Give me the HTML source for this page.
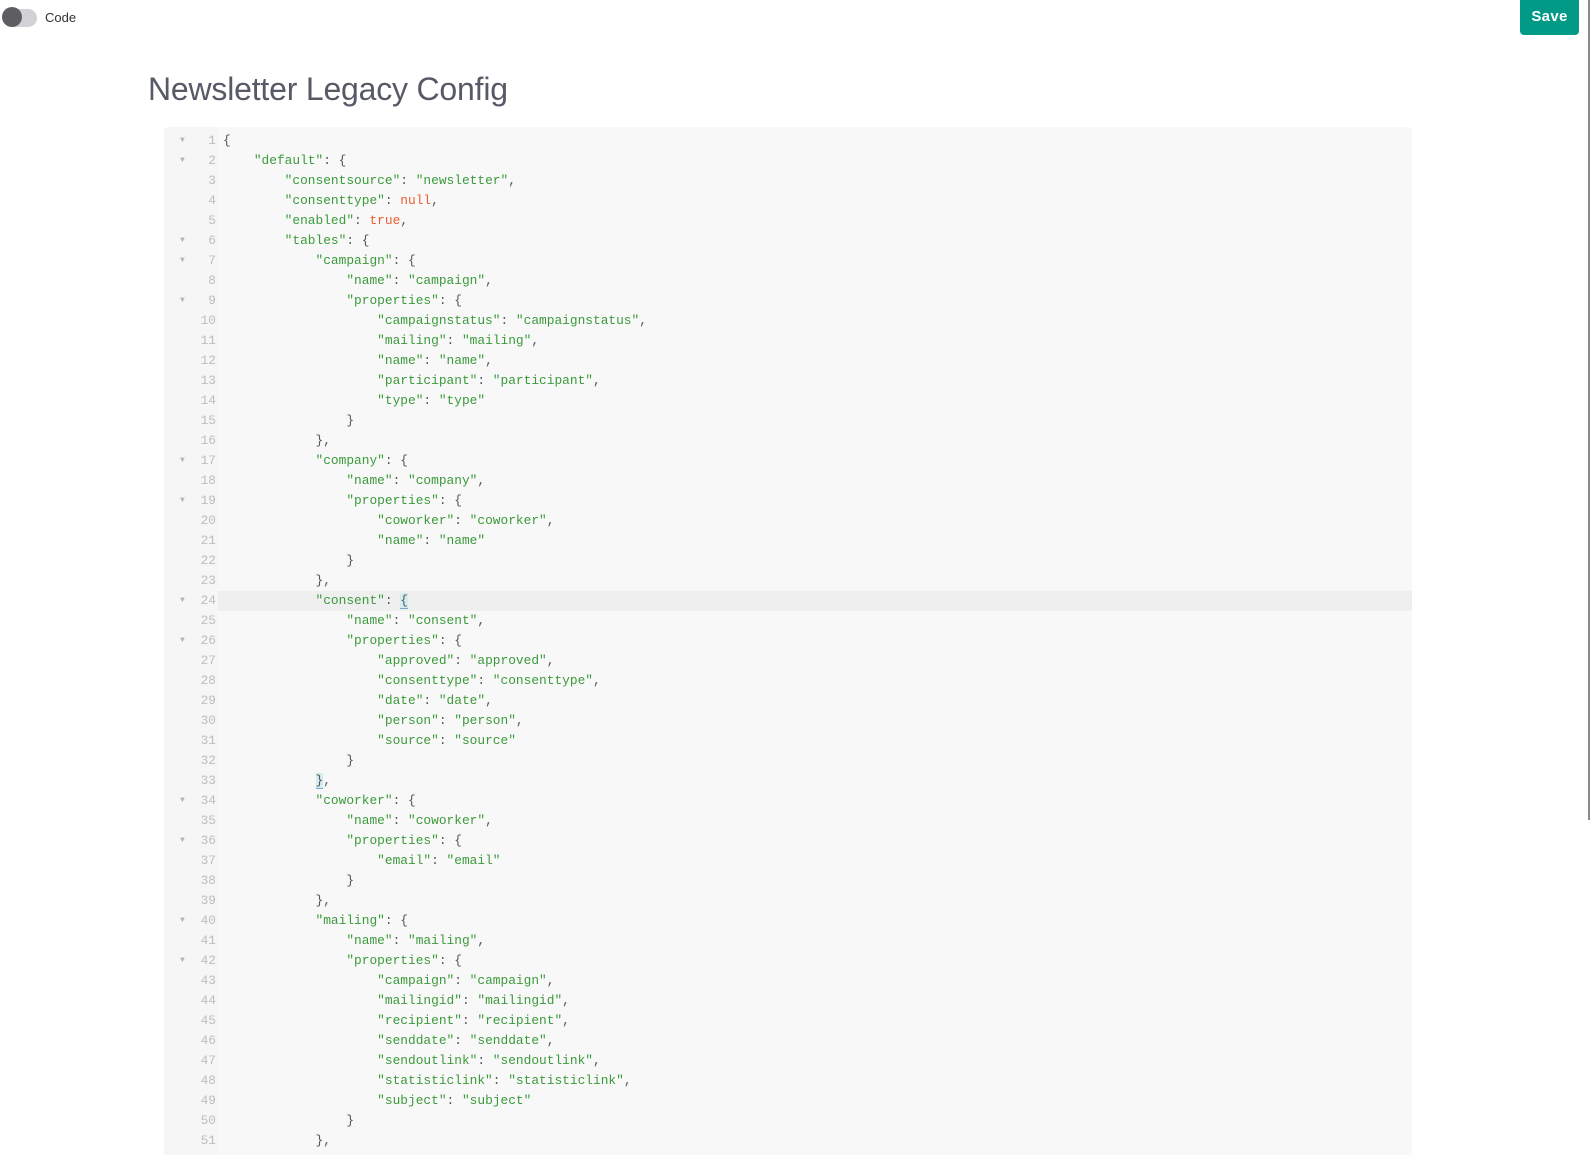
<!DOCTYPE html>
<html><head><meta charset="utf-8"><style>
html,body{margin:0;padding:0;background:#fff;width:1591px;height:1155px;overflow:hidden;position:relative;font-family:"Liberation Sans",sans-serif}
.track{position:absolute;left:3px;top:9px;width:34px;height:18px;border-radius:9px;background:#d2d2d6}
.knob{position:absolute;left:2px;top:7px;width:20px;height:20px;border-radius:50%;background:#5e5e60}
.lbl{position:absolute;left:45px;top:10px;font-size:13px;color:#333}
.save{position:absolute;left:1520px;top:0;width:59px;height:35px;background:#009a87;border-radius:0 0 4px 4px;color:#fff;font-weight:bold;font-size:15px;text-align:center;line-height:33px;letter-spacing:.3px}
.sb{position:absolute;left:1588px;top:0;width:2px;height:820px;background:#8a8a8a}
h1{position:absolute;left:148px;top:71px;margin:0;font-weight:normal;font-size:32px;color:#575a66;letter-spacing:-.2px}
.ed{position:absolute;left:164px;top:127px;width:1248px;height:1040px;background:#f8f8f8;border-radius:4px;overflow:hidden}
.gut{position:absolute;left:0;top:0;width:54px;height:100%;background:#f6f6f6}
.lines{position:absolute;left:0;top:4px;width:100%}
.l{position:relative;height:20px;line-height:20px;font-family:"Liberation Mono",monospace;font-size:12.85px;white-space:pre;color:#555}
.l .n{position:absolute;left:0;width:52px;text-align:right;color:#bdbdbd}
.l .f{position:absolute;left:16px;top:0;color:#b5b5b5;font-size:8px}
.l .c{position:absolute;left:59px}
.l.hl::before{content:"";position:absolute;left:54px;right:0;top:0;height:20px;background:#efefef}
.s{color:#3b9a3b}.k{color:#ed5b2e}
.m{background:#d3ecef;border-bottom:1px solid #7ac}
</style></head><body>
<div class="track"></div><div class="knob"></div><div class="lbl">Code</div>
<div class="save">Save</div>
<div class="sb"></div>
<h1>Newsletter Legacy Config</h1>
<div class="ed"><div class="gut"></div><div class="lines">
<div class="l"><span class="f">▼</span><span class="n">1</span><span class="c">{</span></div>
<div class="l"><span class="f">▼</span><span class="n">2</span><span class="c">    <span class="s">"default"</span>: {</span></div>
<div class="l"><span class="n">3</span><span class="c">        <span class="s">"consentsource"</span>: <span class="s">"newsletter"</span>,</span></div>
<div class="l"><span class="n">4</span><span class="c">        <span class="s">"consenttype"</span>: <span class="k">null</span>,</span></div>
<div class="l"><span class="n">5</span><span class="c">        <span class="s">"enabled"</span>: <span class="k">true</span>,</span></div>
<div class="l"><span class="f">▼</span><span class="n">6</span><span class="c">        <span class="s">"tables"</span>: {</span></div>
<div class="l"><span class="f">▼</span><span class="n">7</span><span class="c">            <span class="s">"campaign"</span>: {</span></div>
<div class="l"><span class="n">8</span><span class="c">                <span class="s">"name"</span>: <span class="s">"campaign"</span>,</span></div>
<div class="l"><span class="f">▼</span><span class="n">9</span><span class="c">                <span class="s">"properties"</span>: {</span></div>
<div class="l"><span class="n">10</span><span class="c">                    <span class="s">"campaignstatus"</span>: <span class="s">"campaignstatus"</span>,</span></div>
<div class="l"><span class="n">11</span><span class="c">                    <span class="s">"mailing"</span>: <span class="s">"mailing"</span>,</span></div>
<div class="l"><span class="n">12</span><span class="c">                    <span class="s">"name"</span>: <span class="s">"name"</span>,</span></div>
<div class="l"><span class="n">13</span><span class="c">                    <span class="s">"participant"</span>: <span class="s">"participant"</span>,</span></div>
<div class="l"><span class="n">14</span><span class="c">                    <span class="s">"type"</span>: <span class="s">"type"</span></span></div>
<div class="l"><span class="n">15</span><span class="c">                }</span></div>
<div class="l"><span class="n">16</span><span class="c">            },</span></div>
<div class="l"><span class="f">▼</span><span class="n">17</span><span class="c">            <span class="s">"company"</span>: {</span></div>
<div class="l"><span class="n">18</span><span class="c">                <span class="s">"name"</span>: <span class="s">"company"</span>,</span></div>
<div class="l"><span class="f">▼</span><span class="n">19</span><span class="c">                <span class="s">"properties"</span>: {</span></div>
<div class="l"><span class="n">20</span><span class="c">                    <span class="s">"coworker"</span>: <span class="s">"coworker"</span>,</span></div>
<div class="l"><span class="n">21</span><span class="c">                    <span class="s">"name"</span>: <span class="s">"name"</span></span></div>
<div class="l"><span class="n">22</span><span class="c">                }</span></div>
<div class="l"><span class="n">23</span><span class="c">            },</span></div>
<div class="l hl"><span class="f">▼</span><span class="n">24</span><span class="c">            <span class="s">"consent"</span>: <span class="m">{</span></span></div>
<div class="l"><span class="n">25</span><span class="c">                <span class="s">"name"</span>: <span class="s">"consent"</span>,</span></div>
<div class="l"><span class="f">▼</span><span class="n">26</span><span class="c">                <span class="s">"properties"</span>: {</span></div>
<div class="l"><span class="n">27</span><span class="c">                    <span class="s">"approved"</span>: <span class="s">"approved"</span>,</span></div>
<div class="l"><span class="n">28</span><span class="c">                    <span class="s">"consenttype"</span>: <span class="s">"consenttype"</span>,</span></div>
<div class="l"><span class="n">29</span><span class="c">                    <span class="s">"date"</span>: <span class="s">"date"</span>,</span></div>
<div class="l"><span class="n">30</span><span class="c">                    <span class="s">"person"</span>: <span class="s">"person"</span>,</span></div>
<div class="l"><span class="n">31</span><span class="c">                    <span class="s">"source"</span>: <span class="s">"source"</span></span></div>
<div class="l"><span class="n">32</span><span class="c">                }</span></div>
<div class="l"><span class="n">33</span><span class="c">            <span class="m">}</span>,</span></div>
<div class="l"><span class="f">▼</span><span class="n">34</span><span class="c">            <span class="s">"coworker"</span>: {</span></div>
<div class="l"><span class="n">35</span><span class="c">                <span class="s">"name"</span>: <span class="s">"coworker"</span>,</span></div>
<div class="l"><span class="f">▼</span><span class="n">36</span><span class="c">                <span class="s">"properties"</span>: {</span></div>
<div class="l"><span class="n">37</span><span class="c">                    <span class="s">"email"</span>: <span class="s">"email"</span></span></div>
<div class="l"><span class="n">38</span><span class="c">                }</span></div>
<div class="l"><span class="n">39</span><span class="c">            },</span></div>
<div class="l"><span class="f">▼</span><span class="n">40</span><span class="c">            <span class="s">"mailing"</span>: {</span></div>
<div class="l"><span class="n">41</span><span class="c">                <span class="s">"name"</span>: <span class="s">"mailing"</span>,</span></div>
<div class="l"><span class="f">▼</span><span class="n">42</span><span class="c">                <span class="s">"properties"</span>: {</span></div>
<div class="l"><span class="n">43</span><span class="c">                    <span class="s">"campaign"</span>: <span class="s">"campaign"</span>,</span></div>
<div class="l"><span class="n">44</span><span class="c">                    <span class="s">"mailingid"</span>: <span class="s">"mailingid"</span>,</span></div>
<div class="l"><span class="n">45</span><span class="c">                    <span class="s">"recipient"</span>: <span class="s">"recipient"</span>,</span></div>
<div class="l"><span class="n">46</span><span class="c">                    <span class="s">"senddate"</span>: <span class="s">"senddate"</span>,</span></div>
<div class="l"><span class="n">47</span><span class="c">                    <span class="s">"sendoutlink"</span>: <span class="s">"sendoutlink"</span>,</span></div>
<div class="l"><span class="n">48</span><span class="c">                    <span class="s">"statisticlink"</span>: <span class="s">"statisticlink"</span>,</span></div>
<div class="l"><span class="n">49</span><span class="c">                    <span class="s">"subject"</span>: <span class="s">"subject"</span></span></div>
<div class="l"><span class="n">50</span><span class="c">                }</span></div>
<div class="l"><span class="n">51</span><span class="c">            },</span></div>
</div></div>
</body></html>
